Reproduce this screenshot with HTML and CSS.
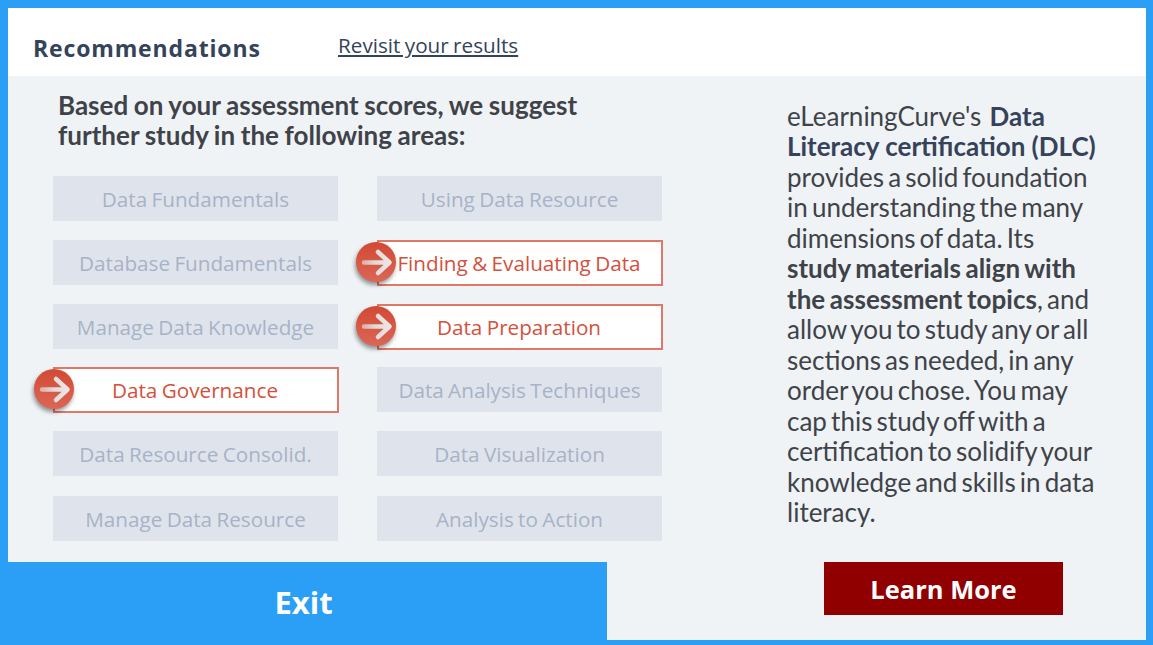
FILE: index.html
```html
<!DOCTYPE html>
<html lang="en">
<head>
    <meta charset="UTF-8">
    <title>Recommendations</title>
    <link rel="stylesheet" href="styles.css">
</head>
<body>
    <svg class="icon-defs" width="0" height="0">
        <defs>
            <linearGradient id="badge-fill" x1="0" y1="0" x2="0" y2="1">
                <stop offset="0" stop-color="#d14a34"></stop>
                <stop offset="1" stop-color="#dc6654"></stop>
            </linearGradient>
            <linearGradient id="arrow-stroke" gradientUnits="userSpaceOnUse" x1="6" y1="0" x2="34" y2="0">
                <stop offset="0" stop-color="#dfaea5"></stop>
                <stop offset="0.5" stop-color="#dedcdc"></stop>
                <stop offset="1" stop-color="#efe6e4"></stop>
            </linearGradient>
            <symbol id="arrow-badge" viewBox="0 0 40 40">
                <circle cx="20" cy="20" r="20" fill="url(#badge-fill)"></circle>
                <path d="M8 20.500H33M22 10L33.500 20.500L22 31" fill="none" stroke="url(#arrow-stroke)" stroke-width="4.500" stroke-linecap="round" stroke-linejoin="round"></path>
            </symbol>
        </defs>
    </svg>
    <div class="frame">
        <header class="top-bar">
            <h1 class="top-title">Recommendations</h1>
            <a href="#" class="top-link">Revisit your results</a>
        </header>
        <div class="content">
            <main class="left-col">
                <h2 class="lead">Based on your assessment scores, we suggest<br>further study in the following areas:</h2>
                <div class="topic-grid">
                    <div class="topic">Data Fundamentals</div>
                    <div class="topic">Using Data Resource</div>
                    <div class="topic">Database Fundamentals</div>
                    <div class="topic flagged">
                        <svg class="badge"><use href="#arrow-badge"></use></svg>
                        Finding &amp; Evaluating Data
                    </div>
                    <div class="topic">Manage Data Knowledge</div>
                    <div class="topic flagged">
                        <svg class="badge"><use href="#arrow-badge"></use></svg>
                        Data Preparation
                    </div>
                    <div class="topic flagged first-col">
                        <svg class="badge"><use href="#arrow-badge"></use></svg>
                        Data Governance
                    </div>
                    <div class="topic">Data Analysis Techniques</div>
                    <div class="topic">Data Resource Consolid.</div>
                    <div class="topic">Data Visualization</div>
                    <div class="topic">Manage Data Resource</div>
                    <div class="topic">Analysis to Action</div>
                </div>
                <button class="exit-btn">Exit</button>
            </main>
            <aside class="right-col">
                <p class="blurb">eLearningCurve's&nbsp; <b class="hl-navy">Data Literacy certification (DLC)</b> provides a solid foundation in understanding the many dimensions of data. Its <b class="hl-dark">study materials align with the assessment topics</b>, and allow you to study any or all sections as needed, in any order you chose. You may cap this study off with a certification to solidify your knowledge and skills in data literacy.</p>
                <button class="learn-btn">Learn More</button>
            </aside>
        </div>
    </div>
</body>
</html>
```

FILE: styles.css
```css
html, body {
    margin: 0;
    padding: 0;
    height: 100%;
    overflow: hidden;
    background-color: #2b9ef6;
}
.icon-defs {
    display: block;
    height: 0;
}
.frame {
    box-sizing: border-box;
    height: 645px;
    padding: 8px 7px 5px 8px;
    display: flex;
    flex-direction: column;
}
.top-bar {
    height: 68px;
    background-color: #ffffff;
    display: flex;
    align-items: center;
    font-family: "Open Sans", sans-serif;
    color: #34435a;
    padding-left: 25px;
    box-sizing: border-box;
    flex-shrink: 0;
}
.top-title {
    margin: 12px 0 0;
    width: 305px;
    font-size: 23px;
    font-weight: 700;
    letter-spacing: 0.85px;
}
.top-link {
    font-size: 20.700px;
    word-spacing: -1px;
    color: #34435a;
    margin-top: 6px;
}
.content {
    flex-grow: 1;
    display: flex;
    background-color: #eff3f6;
}
.left-col {
    width: 599px;
    flex-shrink: 0;
    display: flex;
    flex-direction: column;
}
.lead {
    margin: 14px 0 0 50px;
    font-family: Lato, sans-serif;
    font-size: 26px;
    word-spacing: -0.700px;
    line-height: 30px;
    font-weight: 700;
    color: #3f4349;
}
.topic-grid {
    margin: 26px 0 0 45px;
    display: grid;
    grid-template-columns: 285px 285px;
    grid-template-rows: 64px 64px 63px 64px 65px 45px;
    column-gap: 39px;
}
.topic {
    position: relative;
    height: 45px;
    display: flex;
    align-items: center;
    justify-content: center;
    background-color: #dfe4ec;
    color: #a7b3c7;
    font-family: "Open Sans", sans-serif;
    font-size: 20.700px;
    word-spacing: -1px;
}
.topic.flagged {
    background-color: #ffffff;
    color: #d4513c;
    border: 2px solid #e07868;
    height: 46px;
    width: 286px;
    box-sizing: border-box;
    padding-right: 2px;
}
.badge {
    position: absolute;
    left: -23px;
    top: 0;
    width: 40px;
    height: 40px;
    filter: drop-shadow(-1px 3px 2px rgba(0, 0, 0, 0.4));
}
.first-col .badge {
    left: -21px;
}
.exit-btn {
    margin: auto 0 -5px -8px;
    width: 607px;
    height: 83px;
    flex-shrink: 0;
    border: none;
    background-color: #2b9ef6;
    color: #ffffff;
    font-family: "Open Sans", sans-serif;
    font-size: 31px;
    font-weight: 700;
    padding: 0 0 3px;
}
.right-col {
    flex-grow: 1;
    padding: 24.800px 0 0 180px;
    display: flex;
    flex-direction: column;
}
.blurb {
    margin: 0;
    width: 312px;
    font-family: Lato, sans-serif;
    font-size: 26px;
    word-spacing: -2.500px;
    line-height: 30.500px;
    color: #3f4349;
}
.hl-navy {
    color: #36425a;
    word-spacing: 0;
}
.hl-dark {
    word-spacing: -1.700px;
}
.learn-btn {
    margin: 34.200px 0 0 37px;
    width: 239px;
    height: 53px;
    border: none;
    background-color: #900000;
    color: #ffffff;
    font-family: "Open Sans", sans-serif;
    font-size: 25.500px;
    font-weight: 700;
    padding: 1px 0 0;
}
```
